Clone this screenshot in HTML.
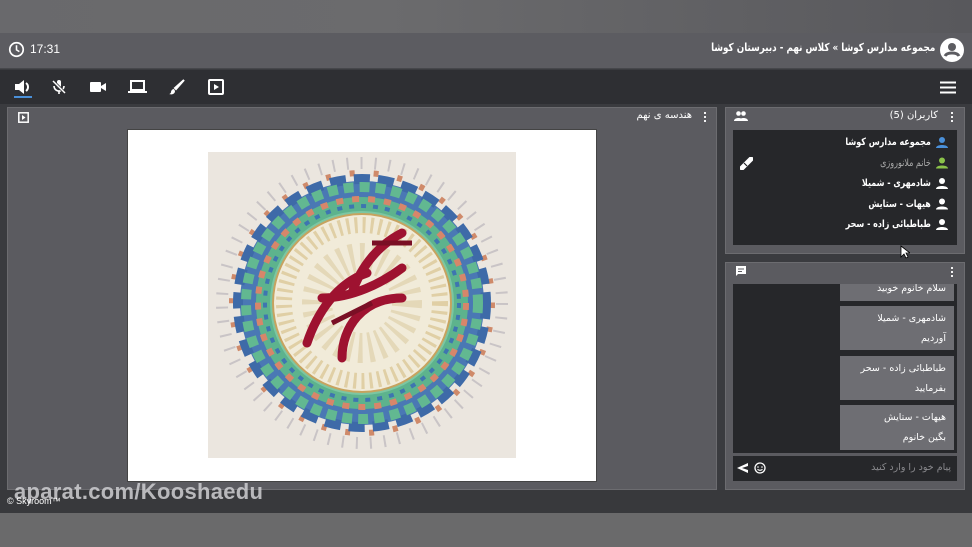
<!DOCTYPE html>
<html><head><meta charset="utf-8"><style>
*{margin:0;padding:0;box-sizing:border-box}
body{width:972px;height:547px;overflow:hidden;background:#3a3b3f;font-family:"Liberation Sans","Noto Sans CJK SC",sans-serif;position:relative;color:#fff}
.a{position:absolute}
.fa{font-family:"DejaVu Sans","Noto Sans CJK SC",sans-serif;direction:rtl}
</style></head><body>
<div class="a" style="left:0;top:0;width:972px;height:33px;background:linear-gradient(90deg,#69696c,#6b6b6d 40%,#58585c)"></div>
<div class="a" style="left:0;top:33px;width:972px;height:36px;background:#5c5c61;border-bottom:1px solid #46474b"></div>
<svg class="a" style="left:8px;top:41px" width="17" height="17" viewBox="0 0 24 24"><circle cx="12" cy="12" r="9.5" fill="none" stroke="#fff" stroke-width="2.4"/><path d="M12 6v6.5l4 2.5" fill="none" stroke="#fff" stroke-width="2.2"/></svg>
<div class="a" style="left:30px;top:42px;font-size:12px;color:#fff">17:31</div>
<div class="a fa" style="right:37px;top:41px;font-size:11px;font-weight:bold;color:#fff;transform:scaleX(.8);transform-origin:right center;white-space:nowrap">مجموعه مدارس کوشا » کلاس نهم - دبیرستان کوشا</div>
<svg class="a" style="left:940px;top:38px" width="24" height="24" viewBox="0 0 24 24"><circle cx="12" cy="12" r="12" fill="#fff"/><circle cx="12" cy="9" r="4" fill="#5c5c61"/><path d="M5 18c2-4 12-4 14 0" stroke="#5c5c61" stroke-width="3" fill="none"/></svg>
<div class="a" style="left:0;top:70px;width:972px;height:34px;background:#2e2f33"></div>
<svg class="a" style="left:14px;top:79px" width="18" height="16" viewBox="0 0 18 16"><path d="M1 5h4l5-4v14l-5-4H1z" fill="#fff"/><path d="M12 4a5 5 0 0 1 0 8" stroke="#fff" stroke-width="2" fill="none"/></svg>
<div class="a" style="left:14px;top:96px;width:18px;height:2px;background:#4a90d9"></div>
<svg class="a" style="left:51px;top:79px" width="16" height="16" viewBox="0 0 16 16"><rect x="6" y="1" width="4" height="8" rx="2" fill="#fff"/><path d="M3 7a5 5 0 0 0 10 0M8 12v3" stroke="#fff" stroke-width="1.6" fill="none"/><path d="M2 2l12 12" stroke="#2e2f33" stroke-width="3"/><path d="M2 2l12 12" stroke="#fff" stroke-width="1.5"/></svg>
<svg class="a" style="left:90px;top:81px" width="16" height="12" viewBox="0 0 16 12"><rect x="0" y="1" width="11" height="10" rx="1" fill="#fff"/><path d="M11 5l5-3v8l-5-3z" fill="#fff"/></svg>
<svg class="a" style="left:128px;top:80px" width="19" height="14" viewBox="0 0 19 14"><rect x="3" y="1" width="13" height="9" fill="none" stroke="#fff" stroke-width="2"/><rect x="0" y="11" width="19" height="2" fill="#fff"/></svg>
<svg class="a" style="left:169px;top:79px" width="16" height="16" viewBox="0 0 16 16"><path d="M15 1L7 10l-1-1z" fill="#fff" stroke="#fff" stroke-width="2"/><path d="M5 10c-2 0-3 2-3 3s-1 2-2 2c3 1 6 0 6-3z" fill="#fff"/></svg>
<svg class="a" style="left:208px;top:79px" width="16" height="16" viewBox="0 0 16 16"><rect x="1" y="1" width="14" height="14" rx="1" fill="none" stroke="#fff" stroke-width="2"/><path d="M6 5v6l5-3z" fill="#fff"/></svg>
<svg class="a" style="left:940px;top:81px" width="16" height="13" viewBox="0 0 16 13"><path d="M0 1.5h16M0 6.5h16M0 11.5h16" stroke="#fff" stroke-width="2"/></svg>
<!-- main panel -->
<div class="a" style="left:7px;top:107px;width:710px;height:383px;background:#5b5b60;border:1px solid #6c6c70"></div>
<svg class="a" style="left:18px;top:112px" width="11" height="11" viewBox="0 0 11 11"><rect x="0.8" y="0.8" width="9.4" height="9.4" fill="none" stroke="#fff" stroke-width="1.5"/><path d="M4 3v5l3.5-2.5z" fill="#fff"/></svg>
<div class="a fa" style="right:280px;top:110px;font-size:10px;color:#fff">هندسه ی نهم</div>
<div class="a" style="left:704px;top:111px;width:2px;height:12px;background:radial-gradient(circle,#fff 1px,transparent 1.2px) 0 0/2px 4px"></div>
<div class="a" style="left:127px;top:129px;width:470px;height:353px;background:#fff;border:1px solid #444"></div>
<svg class="a" style="left:208px;top:152px" width="308" height="306" viewBox="0 0 308 306">
<rect width="308" height="306" fill="#ebe6df"/>
<g transform="translate(154,151)">
<circle r="140" fill="none" stroke="#c9c4c6" stroke-width="12" stroke-dasharray="2 12"/>
<circle r="130" fill="none" stroke="#cf8a6a" stroke-width="6" stroke-dasharray="5 19"/>
<circle r="122" fill="#4a78b4"/>
<circle r="124" fill="none" stroke="#3e6aa8" stroke-width="10" stroke-dasharray="16 8"/>
<circle r="116" fill="none" stroke="#62b891" stroke-width="10" stroke-dasharray="10 6"/>
<circle r="106" fill="#5db38d"/>
<circle r="104" fill="none" stroke="#d7866a" stroke-width="6" stroke-dasharray="7 9"/>
<circle r="97" fill="none" stroke="#3e75b0" stroke-width="4" stroke-dasharray="5 7"/>
<circle r="92" fill="#7cc6a2"/>
<circle r="90" fill="#c6a35f"/>
<circle r="88" fill="#f1ebd9"/>
<circle r="78" fill="none" stroke="#e0cfa5" stroke-width="16" stroke-dasharray="3 5"/>
<circle r="45" fill="none" stroke="#e4d8b8" stroke-width="30" stroke-dasharray="4 6"/>
<path d="M-55 40c10-30 30-60 60-70M-20 55c0-30 20-60 60-60M40 -70c-20 10-40 30-50 60M-40 -5c30 0 60-15 80-30" stroke="#9e1230" stroke-width="9" fill="none" stroke-linecap="round"/>
<path d="M10 -60h40M-30 20l40 -20" stroke="#7a0f25" stroke-width="5" fill="none"/>
</g></svg>
<!-- users panel -->
<div class="a" style="left:725px;top:107px;width:240px;height:147px;background:#5b5b60;border:1px solid #6c6c70"></div>
<svg class="a" style="left:734px;top:111px" width="14" height="10" viewBox="0 0 14 10"><circle cx="4.5" cy="2.5" r="2.3" fill="#fff"/><circle cx="9.5" cy="2.5" r="2.3" fill="#fff"/><path d="M0 10c0-4 9-4 9 0zM5 10c0-4 9-4 9 0z" fill="#fff"/></svg>
<div class="a fa" style="right:34px;top:110px;font-size:10px;color:#fff">کاربران (5)</div>
<div class="a" style="left:951px;top:111px;width:2px;height:12px;background:radial-gradient(circle,#fff 1px,transparent 1.2px) 0 0/2px 4px"></div>
<div class="a" style="left:733px;top:130px;width:224px;height:115px;background:#26272a"></div>
<div class="a fa" style="right:41px;top:133px;font-size:10px;font-weight:bold;line-height:20.5px;text-align:right;white-space:nowrap;transform:scaleX(.8);transform-origin:right center">مجموعه مدارس کوشا<br><span style="color:#aaa;font-weight:normal">خانم ملانوروزی</span><br>شادمهری - شمیلا<br>هیهات - ستایش<br>طباطبائی زاده - سحر</div>
<svg class="a" style="left:936px;top:137px" width="12" height="100" viewBox="0 0 12 100">
<g fill="#4a90d9"><circle cx="6" cy="3" r="3"/><path d="M0 11c0-4 12-4 12 0z"/></g>
<g fill="#8bc34a" transform="translate(0,20.5)"><circle cx="6" cy="3" r="3"/><path d="M0 11c0-4 12-4 12 0z"/></g>
<g fill="#fff" transform="translate(0,41)"><circle cx="6" cy="3" r="3"/><path d="M0 11c0-4 12-4 12 0z"/></g>
<g fill="#fff" transform="translate(0,61.5)"><circle cx="6" cy="3" r="3"/><path d="M0 11c0-4 12-4 12 0z"/></g>
<g fill="#fff" transform="translate(0,82)"><circle cx="6" cy="3" r="3"/><path d="M0 11c0-4 12-4 12 0z"/></g></svg>
<svg class="a" style="left:740px;top:157px" width="13" height="13" viewBox="0 0 13 13"><path d="M2 11l9-9" stroke="#fff" stroke-width="5" stroke-linecap="round"/><path d="M4 6l3 3" stroke="#26272a" stroke-width="1.2"/></svg>
<svg class="a" style="left:900px;top:245px" width="10" height="14" viewBox="0 0 10 14"><path d="M1 1v11l3-3 2 4 2-1-2-4h4z" fill="#fff" stroke="#000" stroke-width="0.8"/></svg>
<!-- chat panel -->
<div class="a" style="left:725px;top:262px;width:240px;height:228px;background:#5b5b60;border:1px solid #6c6c70"></div>
<svg class="a" style="left:735px;top:265px" width="12" height="12" viewBox="0 0 12 12"><path d="M1 1h10v8H3l-2 2z" fill="#fff"/><path d="M3 4h6M3 6.5h4" stroke="#5b5b60" stroke-width="1"/></svg>
<div class="a" style="left:951px;top:266px;width:2px;height:12px;background:radial-gradient(circle,#fff 1px,transparent 1.2px) 0 0/2px 4px"></div>
<div class="a" style="left:733px;top:284px;width:224px;height:169px;background:#26272a"></div>
<div class="a fa" style="left:840px;top:284px;width:114px;height:17px;background:#6e6e73;font-size:9.5px;padding:0 8px;line-height:10px">سلام خانوم خوبید</div>
<div class="a fa" style="left:840px;top:306px;width:114px;height:44px;background:#6e6e73;font-size:9.5px;padding:3px 8px;line-height:20px">شادمهری - شمیلا<br>آوردیم</div>
<div class="a fa" style="left:840px;top:356px;width:114px;height:44px;background:#6e6e73;font-size:9.5px;padding:3px 8px;line-height:20px">طباطبائی زاده - سحر<br>بفرمایید</div>
<div class="a fa" style="left:840px;top:405px;width:114px;height:45px;background:#6e6e73;font-size:9.5px;padding:3px 8px;line-height:20px">هیهات - ستایش<br>بگین خانوم</div>
<div class="a" style="left:733px;top:456px;width:224px;height:25px;background:#26272a"></div>
<div class="a fa" style="right:21px;top:462px;font-size:9.5px;color:#8a8a8e">پیام خود را وارد کنید</div>
<svg class="a" style="left:737px;top:462px" width="30" height="12" viewBox="0 0 30 12"><path d="M11 1L0 6l11 5V8L5 6l6-2z" fill="#fff"/><circle cx="23" cy="6" r="5" fill="none" stroke="#fff" stroke-width="1.3"/><circle cx="21" cy="5" r="0.8" fill="#fff"/><circle cx="25" cy="5" r="0.8" fill="#fff"/><path d="M20.5 7.3q2.5 2 5 0" stroke="#fff" fill="none"/></svg>
<!-- bottom -->
<div class="a" style="left:0;top:490px;width:972px;height:23px;background:#38393c"></div>
<div class="a" style="left:14px;top:479px;font-size:22px;font-weight:bold;color:#cfcfd2;opacity:.85;letter-spacing:.3px">aparat.com/Kooshaedu</div>
<div class="a" style="left:7px;top:496px;font-size:9px;color:#fff">© Skyroom™</div>
<div class="a" style="left:0;top:513px;width:972px;height:34px;background:#6a6a6b"></div>
</body></html>
